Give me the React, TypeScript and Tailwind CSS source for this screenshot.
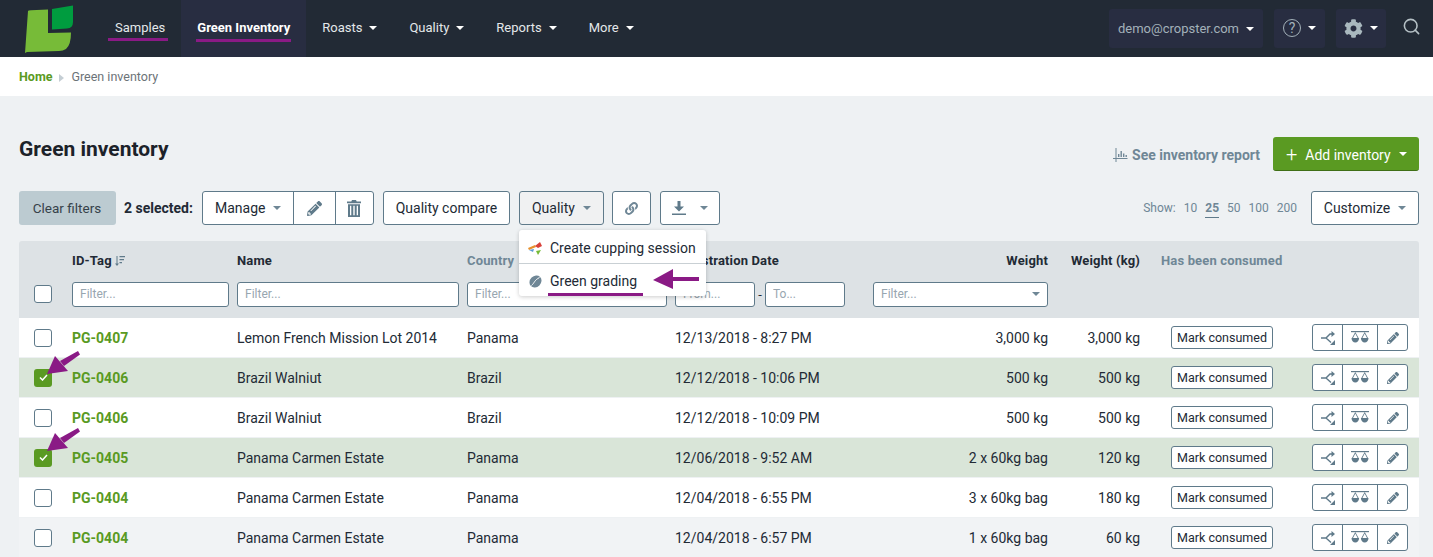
import { FaCog, FaLink, FaPencilAlt } from "react-icons/fa";
import { FiSearch } from "react-icons/fi";

type Row = {
  tag: string;
  name: string;
  country: string;
  date: string;
  weight: string;
  kg: string;
  selected?: boolean;
  alt?: boolean;
};

const rows: Row[] = [
  { tag: "PG-0407", name: "Lemon French Mission Lot 2014", country: "Panama", date: "12/13/2018 - 8:27 PM", weight: "3,000 kg", kg: "3,000 kg" },
  { tag: "PG-0406", name: "Brazil Walniut", country: "Brazil", date: "12/12/2018 - 10:06 PM", weight: "500 kg", kg: "500 kg", selected: true },
  { tag: "PG-0406", name: "Brazil Walniut", country: "Brazil", date: "12/12/2018 - 10:09 PM", weight: "500 kg", kg: "500 kg" },
  { tag: "PG-0405", name: "Panama Carmen Estate", country: "Panama", date: "12/06/2018 - 9:52 AM", weight: "2 x 60kg bag", kg: "120 kg", selected: true },
  { tag: "PG-0404", name: "Panama Carmen Estate", country: "Panama", date: "12/04/2018 - 6:55 PM", weight: "3 x 60kg bag", kg: "180 kg" },
  { tag: "PG-0404", name: "Panama Carmen Estate", country: "Panama", date: "12/04/2018 - 6:57 PM", weight: "1 x 60kg bag", kg: "60 kg", alt: true },
];

const gridCols = "grid grid-cols-[53px_165px_230px_208px_198px_175px_92px_172px_96px]";

function Caret({ className = "border-t-white" }: { className?: string }) {
  return <span className={`inline-block w-0 h-0 border-x-[4px] border-x-transparent border-t-[4px] ${className}`} />;
}

function NavItem({ label }: { label: string }) {
  return (
    <div className="flex items-center gap-[7px] px-4 pb-[2px] text-[13px] text-[#e4e8ea]">
      {label}
      <Caret />
    </div>
  );
}

function TrashIcon() {
  return (
    <svg width="14" height="17" viewBox="0 0 14 17" fill="#5f7a8a">
      <path d="M5 0h4l.7 1.6H14v1.6H0V1.6h4.3zM1 4.2h12V17H1zm2 1.6v9.4h1.3V5.8zm3.3 0v9.4h1.4V5.8zm3.4 0v9.4H11V5.8z" fillRule="evenodd" />
    </svg>
  );
}

function DownloadIcon() {
  return (
    <svg width="14" height="14" viewBox="0 0 14 14" fill="#5f7a8a">
      <path d="M5.5 0h3v5.500H12L7 10.500 2 5.500h3.500zM0 12.400h14V14H0z" />
    </svg>
  );
}

function ChartIcon() {
  return (
    <svg width="15" height="14" viewBox="0 0 15 14" fill="#6f8796">
      <path d="M2.500 0h1v10h11v1h-11v3h-1v-3H0v-1h2.500zM5 6h1.400v3H5zm2.500-3h1.400v6H7.500zm2.500 2.500h1.400V9H10zm2.500 1.500h1.400v2h-1.400z" />
    </svg>
  );
}

function SplitIcon() {
  return (
    <svg width="14" height="14" viewBox="0 0 14 14" fill="none" stroke="#5f7a8a" strokeWidth="1.4">
      <path d="M0 7h5l4-4h2M5 7l5 4.500" />
      <path d="M10.500 0l3.500 3-3.500 3zM9 14h5V9z" fill="#5f7a8a" stroke="none" />
    </svg>
  );
}

function ScaleIcon() {
  return (
    <svg width="18" height="13" viewBox="0 0 18 13" fill="#5f7a8a">
      <path d="M0 0h18v1.200H0z" />
      <path d="M4.300 1L1 7h1l2.300-4.500L6.600 7h1zM13.700 1L10.400 7h1l2.300-4.500L16 7h1z" />
      <path d="M.5 7h7.600a3.800 4.500 0 0 1-7.600 0zM9.900 7h7.600a3.800 4.500 0 0 1-7.600 0z" />
    </svg>
  );
}

function SortIcon() {
  return (
    <svg width="10" height="10" viewBox="0 0 10 10" fill="#5f7a8a">
      <path d="M1.500 0h1v7.500H4L2 10 0 7.500h1.500zM4.500 0H10v1.200H4.500zM4.500 3H9v1.200H4.500zM4.500 6H7v1.200H4.500z" />
    </svg>
  );
}

function Checkbox({ checked }: { checked?: boolean }) {
  if (checked) {
    return (
      <span className="flex items-center justify-center w-[18px] h-[18px] rounded-[3px] bg-[#5a9a22]">
        <svg width="9" height="7" viewBox="0 0 9 7" fill="none" stroke="white" strokeWidth="1.500">
          <path d="M1 3.500l2.500 2.500 4.500-5" />
        </svg>
      </span>
    );
  }
  return <span className="block w-[18px] h-[18px] rounded-[3px] bg-white border border-[#5f7a8a]" />;
}

function FilterInput({ className, placeholder = "Filter..." }: { className: string; placeholder?: string }) {
  return (
    <input
      readOnly
      placeholder={placeholder}
      className={`h-[25px] px-[7px] pb-[2px] bg-white border border-[#5f7a8a] rounded-[3px] text-[12px] placeholder:text-[#98a6b0] outline-none ${className}`}
    />
  );
}

export default function App() {
  return (
    <div className="relative h-[557px] overflow-hidden bg-[#eef1f3] font-['Roboto',sans-serif] text-[#222a35]">
      {/* Top nav */}
      <header className="flex h-[57px] bg-[#222a35]">
        <div className="w-[99px] flex items-center pl-[25px]">
          <svg width="49" height="48" viewBox="0 0 49 48">
            <path d="M3 6Q3 5.500 6 5.300L23 4.500V28L46 27.500Q46 40 41 44Q38 46 34 46L2 47L0 48z" fill="#77bb38" />
            <path d="M27 4L48 .5V17Q48 23 42 23.500L27 24.500z" fill="#009c3f" />
          </svg>
        </div>
        <div className="relative flex items-center px-4 pb-[2px] text-[13px] text-[#e4e8ea]">
          Samples
          <span className="absolute left-[9px] top-[38px] w-[60px] h-[3px] bg-[#8a1a85]" />
        </div>
        <div className="relative flex items-center px-4 pb-[2px] text-[13px] font-bold text-white bg-[#282d41]">
          Green Inventory
          <span className="absolute left-[15px] top-[39px] w-[95px] h-[3px] bg-[#8a1a85]" />
        </div>
        <NavItem label="Roasts" />
        <NavItem label="Quality" />
        <NavItem label="Reports" />
        <NavItem label="More" />
        <div className="ml-auto flex items-center pr-3 pb-[1px]">
          <div className="flex items-center justify-center gap-[7px] w-[154px] h-[39px] pt-[1px] rounded-[3px] bg-[#282d41] text-[13px] text-[#a3b1b9]">
            demo@cropster.com
            <Caret />
          </div>
          <div className="ml-[11px] flex items-center justify-center gap-[7px] w-[51px] h-[39px] rounded-[3px] bg-[#282d41]">
            <span className="flex items-center justify-center w-[18px] h-[18px] rounded-full border border-[#a3b1b9] text-[14px] text-[#a3b1b9]">?</span>
            <Caret />
          </div>
          <div className="ml-[11px] flex items-center justify-center gap-[7px] w-[50px] h-[39px] rounded-[3px] bg-[#282d41]">
            <FaCog className="text-[19px] text-[#a9b8be]" />
            <Caret />
          </div>
          <FiSearch className="ml-[16px] mb-[3px] text-[19px] text-[#b5c0c5]" />
        </div>
      </header>

      {/* Breadcrumb */}
      <div className="flex items-center h-[39px] pt-[2px] px-[19px] bg-white text-[12.500px]">
        <span className="font-bold text-[#5a9a22]">Home</span>
        <span className="mx-[7px] w-0 h-0 border-y-[4px] border-y-transparent border-l-[5px] border-l-[#c5ced4]" />
        <span className="text-[#6c7378]">Green inventory</span>
      </div>

      <main className="px-[14px] ml-[5px]">
        {/* Title */}
        <div className="flex items-center justify-between pt-[41px] h-[75px]">
          <h1 className="mb-[10px] text-[21px] font-bold text-[#1c2229] leading-none">Green inventory</h1>
          <div className="flex items-center">
            <span className="flex items-center gap-[4px] pt-[2px] text-[14px] font-bold text-[#6f8796]">
              <ChartIcon />
              See inventory report
            </span>
            <button className="ml-[13px] flex items-center w-[146px] h-[34px] pl-[13px] pt-[3px] bg-[#5a9a22] rounded-[3px] border-b border-[#3f6f16] text-[14px] text-white">
              <span className="text-[20px] leading-none mr-[8px] mb-[3px] font-light">+</span>
              Add inventory
              <span className="ml-[8px] mb-[2px] flex"><Caret /></span>
            </button>
          </div>
        </div>

        {/* Toolbar */}
        <div className="flex items-center h-[34px] mt-[20px] text-[14px]">
          <button className="w-[97px] h-[34px] pr-[1px] rounded-[3px] bg-[#bccbd1] text-[13.500px] text-[#36424a]">Clear filters</button>
          <span className="ml-2 text-[14px] font-bold">2 selected:</span>
          <div className="ml-[9px] flex h-[34px] bg-white border border-[#5f7a8a] rounded-[3px]">
            <span className="flex items-center gap-[8px] w-[91px] pl-[12px] border-r border-[#5f7a8a]">
              Manage
              <Caret className="border-t-[#6f8796]" />
            </span>
            <span className="flex items-center justify-center w-[42px] border-r border-[#5f7a8a]">
              <FaPencilAlt className="text-[15px] text-[#5f7a8a]" />
            </span>
            <span className="flex items-center justify-center w-[37px]">
              <TrashIcon />
            </span>
          </div>
          <button className="ml-[9px] w-[127px] h-[34px] bg-white border border-[#5f7a8a] rounded-[3px]">Quality compare</button>
          <button className="ml-[9px] flex items-center justify-center gap-[8px] w-[85px] h-[34px] bg-[#f0f1f2] border border-[#5f7a8a] rounded-[3px]">
            Quality
            <Caret className="border-t-[#6f8796]" />
          </button>
          <button className="ml-2 flex items-center justify-center w-[39px] h-[34px] bg-white border border-[#5f7a8a] rounded-[3px]">
            <FaLink className="text-[13px] text-[#6f8796]" />
          </button>
          <button className="ml-[9px] flex items-center justify-center gap-[14px] w-[60px] h-[34px] bg-white border border-[#5f7a8a] rounded-[3px]">
            <DownloadIcon />
            <Caret className="border-t-[#6f8796]" />
          </button>
          <div className="ml-auto flex items-center text-[12px] text-[#6f8796]">
            <span>Show:</span>
            <span className="ml-[8px]">10</span>
            <span className="ml-[8px] font-bold border-b border-[#5f7a8a]">25</span>
            <span className="ml-[8px]">50</span>
            <span className="ml-[8px]">100</span>
            <span className="ml-[8px]">200</span>
            <button className="ml-[14px] flex items-center justify-center gap-[8px] w-[108px] h-[34px] bg-white border border-[#5f7a8a] rounded-[3px] text-[14px] text-[#222a35]">
              Customize
              <Caret className="border-t-[#6f8796]" />
            </button>
          </div>
        </div>

        {/* Table */}
        <div className="mt-4 rounded-t-[3px] text-[13px]">
          <div className={`${gridCols} h-[77px] bg-[#dde2e5] rounded-t-[3px] font-bold tracking-[0.15px]`}>
            <div className="flex flex-col items-start pl-[15px]">
              <span className="mt-[44px]"><Checkbox /></span>
            </div>
            <div className="pt-[13px]">
              <div className="flex items-center gap-[3px] h-[14px]">ID-Tag <SortIcon /></div>
              <FilterInput className="mt-[14px] w-[157px] font-normal tracking-normal" />
            </div>
            <div className="pt-[13px]">
              <div className="h-[14px] leading-[14px]">Name</div>
              <FilterInput className="mt-[14px] w-[222px] font-normal tracking-normal" />
            </div>
            <div className="pt-[13px]">
              <div className="h-[14px] leading-[14px] text-[#6f8796]">Country</div>
              <FilterInput className="mt-[14px] w-[200px] font-normal tracking-normal" />
            </div>
            <div className="pt-[13px]">
              <div className="h-[14px] leading-[14px]">Registration Date</div>
              <div className="mt-[14px] flex items-center font-normal tracking-normal">
                <FilterInput className="w-[80px]" placeholder="From..." />
                <span className="w-[10px] text-center">-</span>
                <FilterInput className="w-[80px]" placeholder="To..." />
              </div>
            </div>
            <div className="pt-[13px] text-right">
              <div className="h-[14px] leading-[14px]">Weight</div>
              <div className="mt-[14px] flex items-center justify-between h-[25px] px-[7px] pb-[2px] bg-white border border-[#5f7a8a] rounded-[3px] text-[12px] font-normal tracking-normal text-[#98a6b0] text-left">
                Filter...
                <Caret className="border-t-[#6f8796]" />
              </div>
            </div>
            <div className="pt-[13px] text-right">
              <div className="h-[14px] leading-[14px]">Weight (kg)</div>
            </div>
            <div className="pt-[13px] pl-[21px]">
              <div className="h-[14px] leading-[14px] text-[#6f8796]">Has been consumed</div>
            </div>
            <div />
          </div>

          {rows.map((row, i) => (
            <div
              key={i}
              className={`${gridCols} items-center h-[39px] mb-[1px] text-[14px] ${row.selected ? "bg-[#d9e5d8]" : row.alt ? "bg-[#f1f3f5]" : "bg-white"}`}
            >
              <div className="relative pl-[15px]">
                <Checkbox checked={row.selected} />
                {row.selected && (
                  <svg
                    className={`absolute left-[7px] ${i === 1 ? "-top-[19px]" : "-top-[22px]"}`}
                    width="56"
                    height="30"
                    viewBox="0 0 56 30"
                    fill="#8a1a85"
                  >
                    <path d="M21 24L29 6L42 21z" />
                    <path d="M34 11L52 1l2 3.500L38 16z" />
                  </svg>
                )}
              </div>
              <div className="pt-[1px] font-bold text-[#5a9a22]">{row.tag}</div>
              <div className="pt-[1px]">{row.name}</div>
              <div className="pt-[1px]">{row.country}</div>
              <div className="pt-[1px]">{row.date}</div>
              <div className="pt-[1px] text-right">{row.weight}</div>
              <div className="pt-[1px] text-right">{row.kg}</div>
              <div className="pl-[31px]">
                <button className="w-[102px] h-[23px] pt-[1px] bg-white border border-[#5f7a8a] rounded-[3px] text-[12.500px]">Mark consumed</button>
              </div>
              <div className="flex h-[27px] bg-white border border-[#5f7a8a] rounded-[3px]">
                <span className="flex items-center justify-center w-[30px] border-r border-[#5f7a8a]"><SplitIcon /></span>
                <span className="flex items-center justify-center w-[35px] border-r border-[#5f7a8a]"><ScaleIcon /></span>
                <span className="flex items-center justify-center flex-1"><FaPencilAlt className="text-[12px] text-[#5f7a8a]" /></span>
              </div>
            </div>
          ))}
        </div>
      </main>

      {/* Quality dropdown */}
      <div className="absolute left-[519px] top-[230px] w-[187px] h-[66px] bg-white rounded-[3px] shadow-[0_1px_4px_rgba(0,0,0,0.2)] text-[14px]">
        <div className="flex items-center h-[34px] pt-[3px] pl-[9px] border-b border-[#c9d0d4]">
          <svg width="15" height="13" viewBox="0 0 15 13" className="mr-[7px]">
            <path d="M0 6l7-3 1 2-7 3z" fill="#e8912d" />
            <path d="M7 4l5-4 2 4-4 2z" fill="#d9413a" />
            <path d="M1 8l5-1-1 3z" fill="#5b9bd5" />
            <path d="M8 9l5-1-3 5z" fill="#77bb38" />
          </svg>
          Create cupping session
        </div>
        <div className="relative flex items-center h-[32px] pt-[2px] pl-[10px]">
          <svg width="13" height="13" viewBox="0 0 13 13" className="mr-[8px]">
            <ellipse cx="6.500" cy="6.500" rx="6.500" ry="5.500" transform="rotate(-45 6.500 6.500)" fill="#6f8796" />
            <path d="M2.500 10.500C5.500 8 5 5.500 10.500 2.500" stroke="white" strokeWidth="1" fill="none" />
          </svg>
          Green grading
          <span className="absolute left-[29px] top-[29px] w-[95px] h-[3px] bg-[#8a1a85]" />
        </div>
      </div>
      <svg className="absolute left-[653px] top-[269px]" width="47" height="22" viewBox="0 0 47 22" fill="#8a1a85">
        <path d="M0 11L20 0v8h26v4H20v8z" />
      </svg>
    </div>
  );
}
